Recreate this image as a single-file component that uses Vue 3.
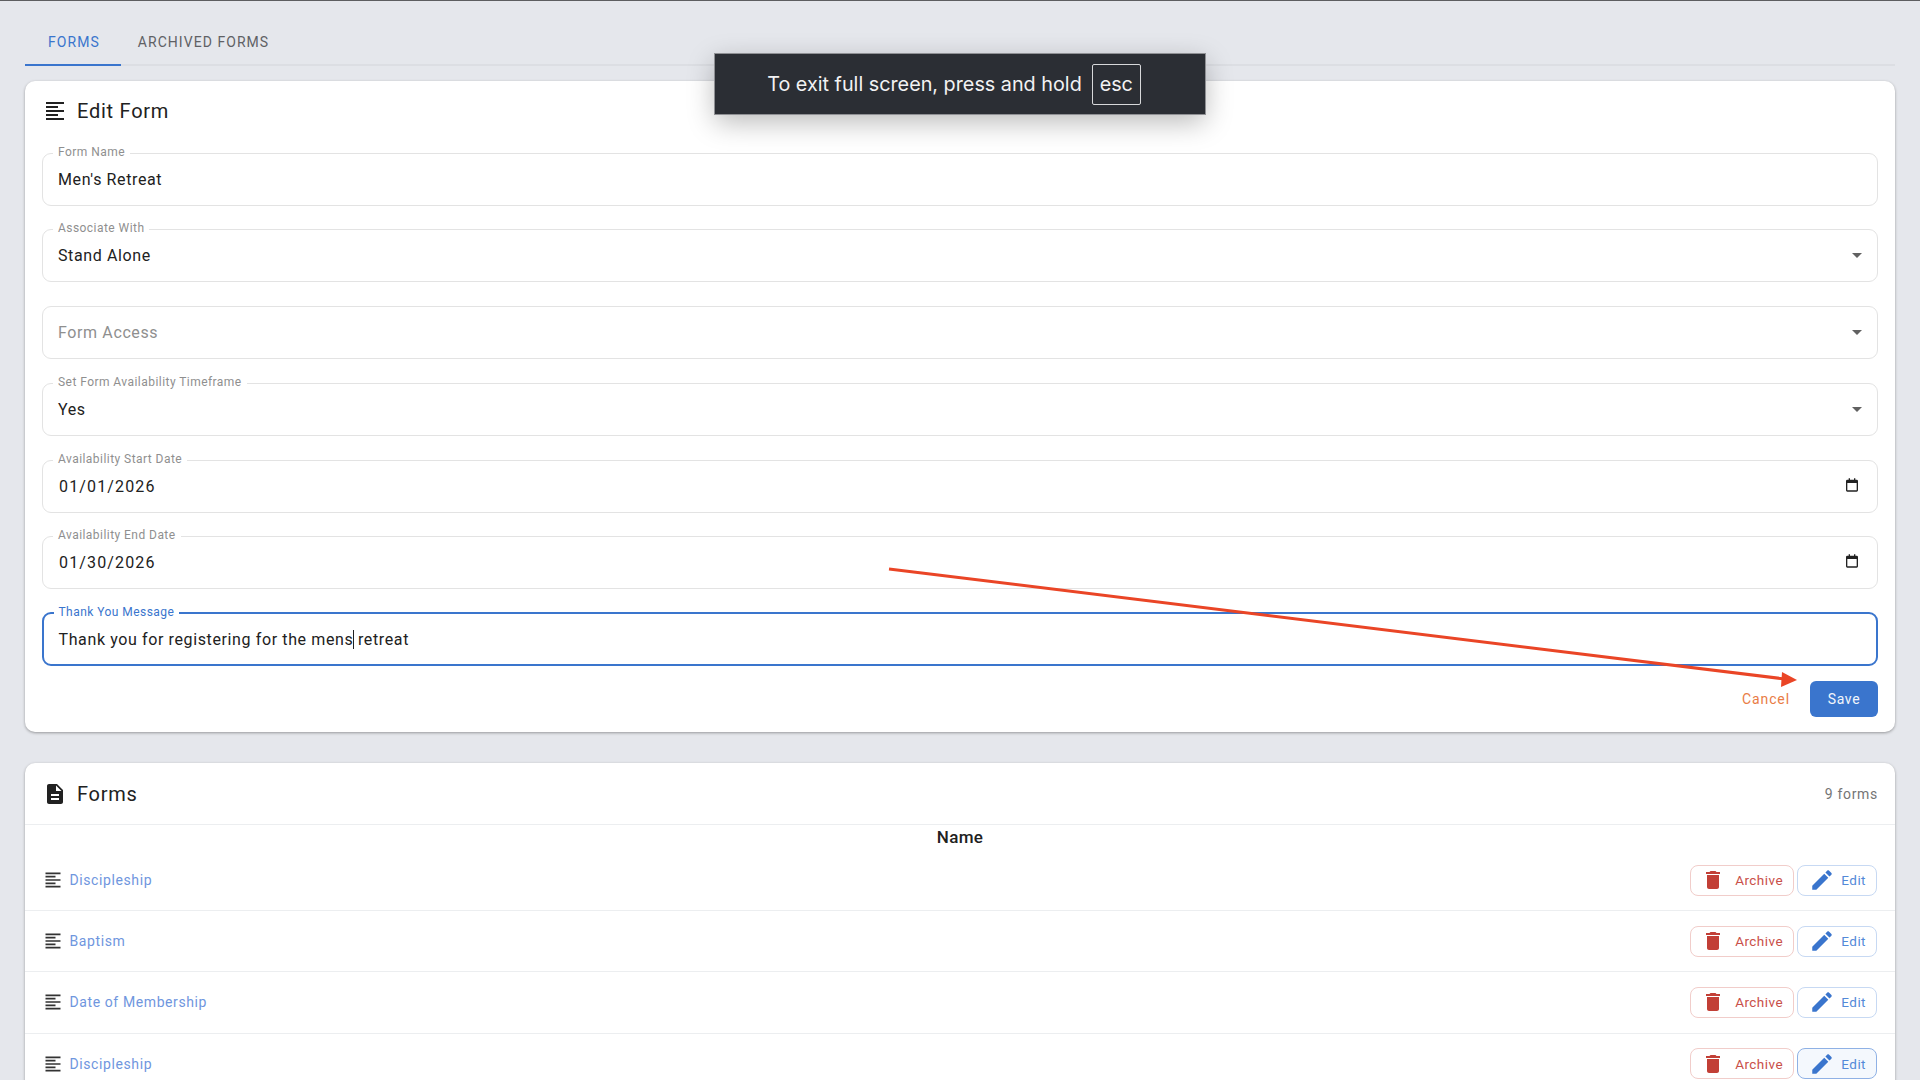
<template>
  <div class="page">
    <div class="topline"></div>
    <main class="content">
      <nav class="tabs">
        <a class="tab active">Forms</a>
        <a class="tab">Archived Forms</a>
      </nav>

      <section class="card edit-card">
        <header class="edit-head">
          <svg class="icon" viewBox="0 0 24 24"><path :d="paths.lines" /></svg>
          <h2>Edit Form</h2>
        </header>

        <div class="fields">
          <div v-for="field in fields" :key="field.label" class="field" :class="{ focused: field.focused, empty: field.empty }">
            <label v-if="!field.empty">{{ field.label }}</label>
            <div class="value" :class="{ date: field.type === 'date' }">
              <template v-if="field.focused">Thank you for registering for the mens<span class="caret"></span> retreat</template>
              <template v-else>{{ field.value || field.label }}</template>
            </div>
            <svg v-if="field.type === 'select'" class="drop" viewBox="0 0 24 24"><path :d="paths.drop" /></svg>
            <svg v-if="field.type === 'date'" class="cal" viewBox="0 0 24 24"><path :d="paths.calendar" /></svg>
          </div>
        </div>

        <div class="actions">
          <button class="cancel">Cancel</button>
          <button class="save">Save</button>
        </div>
      </section>

      <section class="card list-card">
        <header class="list-head">
          <div class="list-title">
            <svg class="icon" viewBox="0 0 24 24"><path :d="paths.doc" /></svg>
            <h2>Forms</h2>
          </div>
          <span class="count">9 forms</span>
        </header>
        <div class="col-name">Name</div>
        <div v-for="(row, i) in rows" :key="i" class="row">
          <div class="row-name">
            <svg class="icon" viewBox="0 0 24 24"><path :d="paths.lines" /></svg>
            <a>{{ row }}</a>
          </div>
          <div class="row-btns">
            <button class="btn archive">
              <svg viewBox="0 0 24 24"><path :d="paths.trash" /></svg>
              Archive
            </button>
            <button class="btn edit" :class="{ hover: i === 3 }">
              <svg viewBox="0 0 24 24"><path :d="paths.pencil" /></svg>
              Edit
            </button>
          </div>
        </div>
      </section>
    </main>

    <svg class="arrow" width="1920" height="1080" viewBox="0 0 1920 1080">
      <line x1="889" y1="569" x2="1785" y2="679" stroke="#ea4526" stroke-width="3" />
      <polygon points="1797,680 1782,672 1781,687" fill="#ea4526" />
    </svg>

    <div class="toast">
      <span>To exit full screen, press and hold</span>
      <kbd>esc</kbd>
    </div>
  </div>
</template>

<script setup>
const paths = {
  lines: 'M15 15H3v2h12v-2zm0-8H3v2h12V7zM3 13h18v-2H3v2zm0 8h18v-2H3v2zM3 3v2h18V3H3z',
  doc: 'M14 2H6c-1.1 0-1.99.9-1.99 2L4 20c0 1.1.89 2 1.99 2H18c1.1 0 2-.9 2-2V8l-6-6zm2 16H8v-2h8v2zm0-4H8v-2h8v2zm-3-5V3.5L18.5 9H13z',
  trash: 'M6 19c0 1.1.9 2 2 2h8c1.1 0 2-.9 2-2V7H6v12zM19 4h-3.5l-1-1h-5l-1 1H5v2h14V4z',
  pencil: 'M3 17.25V21h3.75L17.81 9.94l-3.75-3.75L3 17.25zM20.71 7.04c.39-.39.39-1.02 0-1.41l-2.34-2.34c-.39-.39-1.02-.39-1.41 0l-1.83 1.83 3.75 3.75 1.83-1.83z',
  drop: 'M7 10l5 5 5-5z',
  calendar: 'M7 2h2v2h6V2h2v2h2a2 2 0 0 1 2 2v14a2 2 0 0 1-2 2H5a2 2 0 0 1-2-2V6a2 2 0 0 1 2-2h2V2zM5 9v11h14V9H5z'
}

const fields = [
  { label: 'Form Name', value: "Men's Retreat" },
  { label: 'Associate With', value: 'Stand Alone', type: 'select' },
  { label: 'Form Access', type: 'select', empty: true },
  { label: 'Set Form Availability Timeframe', value: 'Yes', type: 'select' },
  { label: 'Availability Start Date', value: '01/01/2026', type: 'date' },
  { label: 'Availability End Date', value: '01/30/2026', type: 'date' },
  { label: 'Thank You Message', focused: true }
]

const rows = ['Discipleship', 'Baptism', 'Date of Membership', 'Discipleship']
</script>

<style>
html, body { margin: 0; height: 100%; overflow: hidden; background: #e5e7ec; }
</style>

<style scoped>
.page {
  position: relative;
  width: 1920px;
  height: 1080px;
  overflow: hidden;
  background: #e5e7ec;
  font-family: Roboto, "Liberation Sans", sans-serif;
  color: #212121;
}

.topline { height: 1px; background: #5d5e60; }

.content { padding: 0 25px; }

.tabs {
  display: flex;
  height: 65px;
  box-sizing: border-box;
  padding-top: 24px;
  border-bottom: 2px solid #dcdee3;
}

.tab {
  box-sizing: content-box;
  height: 39px;
  margin-bottom: -2px;
  padding: 0 17px;
  line-height: 34px;
  font-size: 14px;
  letter-spacing: 1.05px;
  text-transform: uppercase;
  color: #5f6165;
}

.tab.active {
  padding: 0 21px 0 23px;
  height: 39px;
  color: #3a75cd;
  border-bottom: 2px solid #3a75cd;
}

.card {
  background: #fff;
  border-radius: 10px;
  box-shadow: 0 1px 3px rgba(0, 0, 0, 0.35);
}

.edit-card {
  margin-top: 15px;
  height: 651px;
  box-sizing: border-box;
  padding: 0 17px;
}

.edit-head {
  display: flex;
  align-items: center;
  gap: 9px;
  height: 60px;
}

.edit-head .icon { margin-left: 1px; }
.edit-head h2 { margin-left: 1px; }

h2 {
  margin: 0;
  font-size: 20px;
  font-weight: 400;
  letter-spacing: 0.75px;
}

.icon { width: 24px; height: 24px; fill: #212121; flex: none; }

.fields {
  display: flex;
  flex-direction: column;
  gap: 23.8px;
  margin-top: 11.5px;
}

.field {
  position: relative;
  height: 53px;
  box-sizing: border-box;
  border: 1.5px solid #e3e3e3;
  border-radius: 9px;
  display: flex;
  align-items: center;
  padding: 0 15px;
}

.field label {
  position: absolute;
  top: -9px;
  left: 10px;
  padding: 0 5px;
  background: #fff;
  font-size: 12px;
  line-height: 14px;
  letter-spacing: 0.45px;
  color: #8f8f8f;
}

.value {
  font-size: 16px;
  letter-spacing: 0.62px;
  color: #212121;
}

.value.date { letter-spacing: 1.15px; padding-left: 1px; }

.field.empty .value { color: #8f8f8f; }

.field.focused {
  border: 2px solid #3a75cd;
  height: 54px;
  margin-top: -1px;
  padding: 0 14.5px;
}

.field.focused label { color: #3a75cd; top: -9.5px; left: 9.5px; }

.caret {
  display: inline-block;
  width: 1px;
  height: 19px;
  margin-right: -1px;
  background: #212121;
  vertical-align: -4px;
}

.drop {
  position: absolute;
  right: 8px;
  top: 13px;
  width: 24px;
  height: 24px;
  fill: #616161;
}

.cal {
  position: absolute;
  right: 17px;
  top: 16px;
  width: 16px;
  height: 16px;
  fill: #222;
}

.actions {
  display: flex;
  justify-content: flex-end;
  align-items: center;
  gap: 20px;
  margin-top: 15px;
}

button { font-family: inherit; cursor: pointer; }

.cancel {
  border: 0;
  padding: 0;
  background: none;
  font-size: 14px;
  letter-spacing: 0.9px;
  color: #e97c45;
}

.save {
  width: 68px;
  height: 36px;
  border: 0;
  border-radius: 6px;
  background: #3a75cd;
  color: #f2f5fb;
  font-size: 14px;
  letter-spacing: 0.7px;
}

.list-card {
  margin-top: 31px;
  height: 400px;
}

.list-head {
  display: flex;
  justify-content: space-between;
  align-items: center;
  height: 61px;
  padding: 0 18px;
  border-bottom: 1px solid #eceef0;
}

.list-title { display: flex; align-items: center; gap: 10px; }

.count { font-size: 14px; letter-spacing: 0.7px; color: #757575; margin-right: -1px; }

.col-name {
  text-align: center;
  height: 25px;
  line-height: 25px;
  font-size: 17px;
  font-weight: 500;
  letter-spacing: 0.3px;
}

.row {
  display: flex;
  justify-content: space-between;
  align-items: center;
  height: 61.2px;
  box-sizing: border-box;
  padding: 0 18px;
  border-bottom: 1px solid #eceef0;
}

.row-name { display: flex; align-items: center; gap: 6.5px; }

.row-name .icon { width: 20px; height: 20px; fill: #333; }

.row-name a {
  font-size: 14px;
  letter-spacing: 0.6px;
  color: #6f96de;
}

.row-btns { display: flex; gap: 3px; }

.btn {
  display: flex;
  align-items: center;
  justify-content: space-between;
  height: 31px;
  box-sizing: border-box;
  background: #fff;
  border-radius: 8px;
  font-size: 13.5px;
  letter-spacing: 0.45px;
}

.btn svg { width: 24px; height: 24px; flex: none; }

.archive {
  width: 104px;
  padding: 0 10px;
  border: 1px solid #f1cdca;
  color: #c9504a;
}

.archive svg { fill: #c23f36; }

.edit {
  width: 80px;
  padding: 0 10px 0 11px;
  border: 1px solid #c7d9f3;
  color: #5389d8;
}

.edit svg { width: 26px; height: 26px; fill: #3a75cd; }

.edit.hover {
  background: #f4f8fd;
  border-color: #8fb1e5;
}

.arrow {
  position: absolute;
  top: 0;
  left: 0;
  pointer-events: none;
}

.toast {
  position: absolute;
  top: 54px;
  left: 715px;
  width: 490px;
  height: 60px;
  box-sizing: border-box;
  padding-right: 12px;
  display: flex;
  justify-content: center;
  align-items: center;
  gap: 10px;
  background: #2b2e34;
  outline: 1px solid #8f9094;
  box-shadow: 0 8px 28px rgba(0, 0, 0, 0.28);
  color: #f2f2f3;
  font-family: Inter, "Liberation Sans", sans-serif;
  font-size: 19.8px;
}

.toast kbd {
  display: flex;
  align-items: center;
  justify-content: center;
  width: 49px;
  height: 41px;
  box-sizing: border-box;
  border: 1px solid #d7d8da;
  border-radius: 2px;
  font-family: inherit;
  font-size: 19.8px;
}
</style>
